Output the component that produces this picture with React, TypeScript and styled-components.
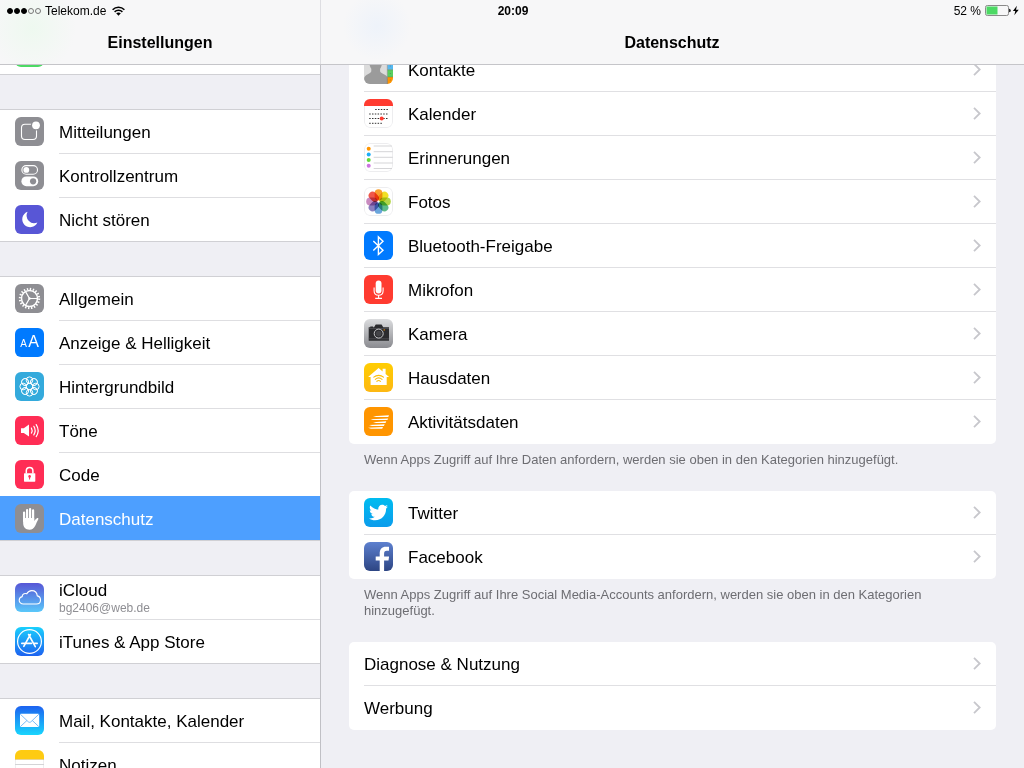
import React from "react";
import styled, { createGlobalStyle, css } from "styled-components";
import { FaTwitter } from "react-icons/fa";

const GlobalStyle = createGlobalStyle`
  * { box-sizing: border-box; }
  body {
    margin: 0;
    background: #efeff4;
    color: #000;
    font-family: "Liberation Sans", Arial, Helvetica, sans-serif;
    font-size: 17px;
  }
  h1, h2, p, ul { margin: 0; padding: 0; }
  ul { list-style: none; }
`;

const Screen = styled.div`
  display: flex;
  flex-direction: column;
  height: 100vh;
  overflow: hidden;
`;

/* ---------- header ---------- */

const Header = styled.header`
  flex: none;
  border-bottom: 1px solid #c5c5c9;
  background:
    linear-gradient(#dedee2, #dedee2) 320px 0 / 1px 100% no-repeat,
    radial-gradient(circle at 32px 28px, rgba(232, 250, 234, 0.6), rgba(232, 250, 234, 0) 44px),
    radial-gradient(circle at 377px 26px, rgba(234, 241, 251, 0.7), rgba(234, 241, 251, 0) 34px),
    #f7f7f8;
`;

const StatusBar = styled.div`
  display: grid;
  grid-template-columns: 1fr auto 1fr;
  align-items: center;
  height: 20px;
  padding: 1px 5px 0 7px;
  font-size: 12px;
  line-height: 20px;
`;

const StatusGroup = styled.div<{ $end?: boolean }>`
  display: flex;
  align-items: center;
  justify-content: ${(p) => (p.$end ? "flex-end" : "flex-start")};
  gap: 4px;
`;

const Clock = styled.time`
  font-weight: bold;
`;

const Signal = styled.span`
  display: flex;
  gap: 1px;
`;

const SignalDot = styled.i<{ $on: boolean }>`
  width: 6px;
  height: 6px;
  border: 1px solid ${(p) => (p.$on ? "#000" : "#777")};
  border-radius: 50%;
  background: ${(p) => (p.$on ? "#000" : "transparent")};
`;

const Titles = styled.div`
  display: flex;
  height: 44px;
  line-height: 46px;
  text-align: center;
`;

const SideTitle = styled.h1`
  flex: 0 0 320px;
  font-size: 16px;
`;

const MainTitle = styled.h2`
  flex: 1;
  font-size: 16px;
`;

/* ---------- panes ---------- */

const Panes = styled.div`
  display: flex;
  flex: 1;
  min-height: 0;
`;

const Sidebar = styled.nav`
  flex: 0 0 321px;
  overflow: hidden;
  border-right: 1px solid #c0c0c5;
`;

const Detail = styled.main`
  flex: 1;
  min-width: 0;
  overflow: hidden;
  padding: 0 28px;
`;

const Scrolled = styled.div<{ $by: number }>`
  margin-top: -${(p) => p.$by}px;
`;

const SideGroup = styled.ul`
  margin-bottom: 34px;
  border-top: 1px solid #d0d0d4;
  border-bottom: 1px solid #d0d0d4;
  background: #fff;
`;

const SideItem = styled.li`
  &:last-child > a { height: 43px; }
  &:last-child > a > div { border-bottom: 0; }
  &:has(+ li > [aria-current]) > a > div { border-color: #4d9fff; }
`;

const SideLink = styled.a<{ $selected: boolean }>`
  display: flex;
  align-items: stretch;
  gap: 15px;
  height: 44px;
  padding-left: 15px;
  color: #000;
  text-decoration: none;
  & > svg { margin-top: 7px; }
  ${(p) =>
    p.$selected &&
    css`
      background: #4d9fff;
      box-shadow: 0 -1px #4d9fff;
      color: #fff;
    `}
`;

const SideText = styled.div`
  display: flex;
  flex: 1;
  flex-direction: column;
  justify-content: center;
  padding-top: 2px;
  border-bottom: 1px solid #dedee1;
  line-height: 20px;
`;

const SideNote = styled.small`
  color: #8e8e93;
  font-size: 12px;
  line-height: 15px;
`;

const Card = styled.ul`
  overflow: hidden;
  padding-left: 15px;
  border-radius: 5px;
  background: #fff;
`;

const CardItem = styled.li`
  border-bottom: 1px solid #e0e0e3;
  &:last-child { border-color: transparent; }
`;

const CardLink = styled.a`
  display: flex;
  align-items: center;
  gap: 15px;
  height: 43px;
  padding-right: 15px;
  color: #000;
  text-decoration: none;
`;

const CardLabel = styled.span`
  flex: 1;
  padding-top: 2px;
  line-height: 20px;
`;

const Footnote = styled.p`
  padding: 8px 15px 23px;
  color: #6d6d72;
  font-size: 13px;
  line-height: 16px;
`;

const IconSvg = styled.svg`
  display: block;
  flex: none;
  width: 29px;
  height: 29px;
  border-radius: 6px;
`;

/* ---------- icons ---------- */

type Fill = string | [string, string];

function Tile({ id, fill, framed, children }: { id: string; fill: Fill; framed?: boolean; children?: React.ReactNode }) {
  const gradient = Array.isArray(fill);
  return (
    <IconSvg viewBox="0 0 29 29" fill="none" aria-hidden="true">
      {gradient && (
        <linearGradient id={id} x1="0" y1="0" x2="0" y2="1">
          <stop stopColor={fill[0]} />
          <stop offset="1" stopColor={fill[1]} />
        </linearGradient>
      )}
      <rect width="29" height="29" fill={gradient ? `url(#${id})` : (fill as string)} />
      {framed && <rect x="0.5" y="0.5" width="28" height="28" rx="5.5" stroke="#ededef" />}
      {children}
    </IconSvg>
  );
}

const GRAY = "#8e8e93";
const ring = (n: number) => Array.from({ length: n }, (_, i) => (i * 360) / n);

const icons: Record<string, React.ReactNode> = {
  green: <Tile id="green" fill="#4cd964" />,
  notifications: (
    <Tile id="notifications" fill={GRAY}>
      <rect x="6.5" y="7.2" width="15" height="15.3" rx="3.5" stroke="#fff" strokeWidth="1.1" />
      <circle cx="21" cy="8.3" r="5.2" fill={GRAY} />
      <circle cx="21" cy="8.3" r="3.9" fill="#fff" />
    </Tile>
  ),
  control: (
    <Tile id="control" fill={GRAY}>
      <rect x="6.9" y="4.6" width="15.6" height="8.6" rx="4.3" stroke="#fff" strokeWidth="1.1" />
      <circle cx="11.3" cy="8.9" r="2.9" fill="#fff" />
      <rect x="6.4" y="15.4" width="16.8" height="9.8" rx="4.9" fill="#fff" />
      <circle cx="18.1" cy="20.3" r="3.1" fill={GRAY} />
    </Tile>
  ),
  moon: (
    <Tile id="moon" fill="#5856d6">
      <path d="M12.6 6.8A7.9 7.9 0 1 0 22.4 17.4 7.6 7.6 0 0 1 12.6 6.8z" fill="#fff" />
    </Tile>
  ),
  gear: (
    <Tile id="gear" fill={GRAY}>
      <circle cx="14.5" cy="14.5" r="9.6" stroke="#fff" strokeWidth="2.2" strokeDasharray="1.4 1.616" />
      <circle cx="14.5" cy="14.5" r="8" stroke="#fff" strokeWidth="1.5" />
      <path d="M14.5 14.5h7.5M14.5 14.5l-3.8-6.6M14.5 14.5l-3.8 6.6" stroke="#fff" strokeWidth="1.2" />
      <circle cx="14.5" cy="14.5" r="1.2" fill="#fff" />
    </Tile>
  ),
  display: (
    <Tile id="display" fill="#007aff">
      <text x="5.2" y="19" fill="#fff" fontSize="10">A</text>
      <text x="13.3" y="19" fill="#fff" fontSize="16">A</text>
    </Tile>
  ),
  wallpaper: (
    <Tile id="wallpaper" fill="#34aadc">
      <g stroke="#fff" strokeWidth="1">
        <circle cx="14.5" cy="14.5" r="3.3" />
        {ring(8).map((a) => (
          <circle key={a} cx="14.5" cy="8.2" r="3.3" transform={`rotate(${a} 14.5 14.5)`} />
        ))}
      </g>
    </Tile>
  ),
  sounds: (
    <Tile id="sounds" fill="#ff2d55">
      <path d="M6 12.2h2.8l5.2-3.6v12l-5.2-3.6H6z" fill="#fff" />
      <g stroke="#fff" strokeWidth="1.2" strokeLinecap="round">
        <path d="M16.4 12.1a5 5 0 0 1 0 5" />
        <path d="M18.8 10.3a8 8 0 0 1 0 8.6" />
        <path d="M21.2 8.6a11 11 0 0 1 0 12" />
      </g>
    </Tile>
  ),
  lock: (
    <Tile id="lock" fill="#ff2d55">
      <rect x="9" y="13.2" width="11.3" height="8.5" rx="0.6" fill="#fff" />
      <path d="M11.3 13.5v-2.8a3.3 3.3 0 0 1 6.6 0v2.8" stroke="#fff" strokeWidth="1.5" />
      <circle cx="14.6" cy="16.4" r="1.3" fill="#ff2d55" />
      <path d="M14.6 16.5v3" stroke="#ff2d55" strokeWidth="1" />
    </Tile>
  ),
  hand: (
    <Tile id="hand" fill={GRAY}>
      <g stroke="#fff" strokeWidth="2.2" strokeLinecap="round">
        <path d="M9.1 8.6V17M12.1 6v10M15.1 5v11M18.1 6.4V17" />
      </g>
      <path d="M8 14h11.2v3.2c.8-1.4 1.700-2.500 2.800-3 .8-.3 1.700.2 1.300 1-1 1.700-2 4.400-3.200 6.700-1.300 2.400-2.900 3.800-5.600 3.800-4 0-5.900-2.400-6.300-5.600z" fill="#fff" />
    </Tile>
  ),
  cloud: (
    <Tile id="cloud" fill={["#5756d6", "#5ac8fa"]}>
      <path d="M8.300 21C5.900 21 4.200 19.400 4.200 17.300c0-1.900 1.200-3.300 3-3.700.1-1.900 1.500-3.100 3.200-3.100.5 0 1 .1 1.400.3 1-2 2.700-3.200 4.900-3.200 3 0 5.300 2.200 5.600 5.300 2 .5 3.200 2 3.200 4 0 2.300-1.700 4.100-4.100 4.100z" stroke="#fff" strokeWidth="1.1" />
    </Tile>
  ),
  appstore: (
    <Tile id="appstore" fill={["#1ad0fd", "#1d62f0"]}>
      <circle cx="14.500" cy="14.500" r="11.900" stroke="#fff" strokeWidth="1.200" />
      <g stroke="#fff" strokeWidth="1.600" strokeLinecap="round">
        <path d="M13.600 7.500l6.700 12.200M15.400 7.500L8.800 19.400" />
        <path d="M6.800 16.400h9.700M19.500 16.400h2.700" />
      </g>
    </Tile>
  ),
  mail: (
    <Tile id="mail" fill={["#1d62f0", "#19d5fd"]}>
      <rect x="5" y="7.800" width="19.200" height="13.200" rx="1" fill="#fff" />
      <path d="M5.300 8.200l8 7.600c.8.700 1.800.7 2.600 0l8-7.600M5.400 20.600l6.600-6.200M23.800 20.600l-6.600-6.200" stroke="#6db4f6" strokeWidth="0.900" />
    </Tile>
  ),
  notes: (
    <Tile id="notes" fill="#fff" framed>
      <rect width="29" height="9" fill="#fecb12" />
      <path d="M0 9.500h29" stroke="#d9b64a" strokeWidth="0.600" />
      <path d="M0 14.500h29M0 20.500h29" stroke="#d4d4d6" />
    </Tile>
  ),
  contacts: (
    <Tile id="contacts" fill="#dcdcdc">
      <path d="M11.700 2c4.200 0 6.600 2.600 6.300 6.300-.2 2.600-.9 4-1.900 5.400v2.600c0 2.400 7.400 2.800 7.900 7.700v5H0v-5c.5-4.900 7.300-5.300 7.300-7.700v-2.600c-1-1.400-1.700-2.800-1.900-5.400C5.100 4.600 7.500 2 11.700 2z" fill="#9b9b9b" />
      <path d="M23.500 0H29v8h-5.500z" fill="#9b9b9b" />
      <path d="M23.500 8H29v6.800h-5.500z" fill="#54b8f0" />
      <path d="M23.500 14.800H29V22h-5.500z" fill="#58cf5e" />
      <path d="M23.500 22H29v7h-5.500z" fill="#ff9500" />
      <path d="M23.300 0v29M23.500 14.800H29M23.500 22H29" stroke="#666" strokeWidth="0.400" />
      <path d="M25.800 11h1.200M25.800 18.500h1.200M25.800 25h1.200" stroke="#555" strokeWidth="0.800" opacity="0.500" />
    </Tile>
  ),
  calendar: (
    <Tile id="calendar" fill="#fff" framed>
      <rect width="29" height="7" fill="#ff3b30" />
      <g stroke="#333" strokeWidth="1" strokeDasharray="1.500 1.300">
        <path d="M11.200 10.500h13.500M5.200 15h19.500M5.200 19.500h19.500M5.200 24.300h13.800" />
      </g>
      <circle cx="17.700" cy="19.600" r="2" fill="#ff3b30" />
    </Tile>
  ),
  reminders: (
    <Tile id="reminders" fill="#fff" framed>
      <path d="M9.700 3h18.300M9.700 8.700h19M9.700 14.300h19M9.700 20h19M9.700 25.500h18.300" stroke="#d0d0d3" strokeWidth="0.900" />
      <circle cx="4.700" cy="5.700" r="2" fill="#ff9500" />
      <circle cx="4.700" cy="11.400" r="2" fill="#1badf8" />
      <circle cx="4.700" cy="17.100" r="2" fill="#63da38" />
      <circle cx="4.700" cy="22.700" r="2" fill="#cc73e1" />
    </Tile>
  ),
  photos: (
    <Tile id="photos" fill="#fff" framed>
      {["#f9a030", "#f1e025", "#b3d646", "#5cbb8a", "#6aa6dc", "#8a7fc0", "#c98bc0", "#f0584a"].map((c, i) => (
        <rect
          key={c}
          x="10.600"
          y="2.200"
          width="7.800"
          height="11.200"
          rx="3.900"
          fill={c}
          style={{ mixBlendMode: "multiply" }}
          transform={`rotate(${i * 45} 14.500 14.500)`}
        />
      ))}
    </Tile>
  ),
  bluetooth: (
    <Tile id="bluetooth" fill="#007aff">
      <path d="M9.300 10l9.700 9.200-4.600 4.300V5.900l4.600 4.300-9.700 9.200" stroke="#fff" strokeWidth="1.400" />
    </Tile>
  ),
  mic: (
    <Tile id="mic" fill="#ff3b30">
      <rect x="11.700" y="5.500" width="5.800" height="13" rx="2.900" fill="#fff" />
      <path d="M10.100 12.500v3.200c0 2.800 1.900 4.600 4.500 4.600s4.500-1.800 4.500-4.600v-3.200M14.600 20.300v3M11.200 23.400h6.800" stroke="#fff" strokeWidth="1.100" />
    </Tile>
  ),
  camera: (
    <Tile id="camera" fill={["#dbdcde", "#8a8b90"]}>
      <path d="M4.700 8.300h1.600v-.9h2.800v.9h1l1.300-2.300c.2-.4.500-.5.900-.5h4.700c.4 0 .7.100.9.500l1.300 2.300h5.800v13.400H4.700z" fill="#2b2b2e" />
      <path d="M4.700 9.500h20.300M4.700 19.800h20.300" stroke="#66666a" strokeWidth="0.500" />
      <circle cx="14.700" cy="14.600" r="4.500" fill="#2b2b2e" stroke="#c9c9cc" strokeWidth="1" />
      <circle cx="14.700" cy="14.600" r="2.800" fill="#444448" />
      <circle cx="20.200" cy="10.900" r="0.700" fill="#ff9500" />
    </Tile>
  ),
  home: (
    <Tile id="home" fill={["#ffcd02", "#fdb813"]}>
      <path d="M14.600 5l4 3.400V5.700h3v5.200l3.500 3h-2.400v8H6.600v-8H4.100z" fill="#fff" />
      <g stroke="#fcbf0a" strokeWidth="1.100" strokeLinecap="round">
        <path d="M9.800 14.200c2.800-2.500 6.900-2.500 9.700 0M11.300 16.300c2-1.700 4.700-1.700 6.700 0M12.900 18.300c1.100-.9 2.500-.9 3.500 0" />
      </g>
    </Tile>
  ),
  activity: (
    <Tile id="activity" fill="#ff9500">
      <path d="M9 9.300l16-1-.7 1.700H12zM6.500 12.200l17.700-.8-.8 1.600H9zM9 15.200l13.300-.9-.8 1.700H12zM5 18l15.700-.7-.8 1.600H8zM4 20.800l15-.7-.8 1.700H7z" fill="#fff" />
    </Tile>
  ),
  twitter: (
    <Tile id="twitter" fill={["#00bcf0", "#0b9cec"]}>
      <FaTwitter x="5" y="5" size={19} color="#fff" />
    </Tile>
  ),
  facebook: (
    <Tile id="facebook" fill={["#5d80cf", "#2d4583"]}>
      <path d="M15.700 29V18.600h-4v-4h4v-2.800c0-4.600 2.200-7 6.200-7H25v4h-2.200c-2.100 0-2.700 1.100-2.700 2.900v2.900h5l-.6 4h-4.400V29z" fill="#fff" />
    </Tile>
  ),
};

const Chevron = () => (
  <svg width="8" height="13" viewBox="0 0 8 13" fill="none" aria-hidden="true">
    <path d="M1 0.800l5.700 5.700L1 12.200" stroke="#c7c7cc" strokeWidth="1.800" />
  </svg>
);

const Wifi = () => (
  <svg width="15" height="10" viewBox="-2 0 15 10" fill="none" aria-hidden="true">
    <path d="M0.600 3.700c3.300-3.400 8.500-3.400 11.800 0M2.600 5.900c2.200-2.200 5.600-2.200 7.800 0" stroke="#000" strokeWidth="1.500" />
    <path d="M4.200 7.300c1.300-1.200 3.300-1.200 4.600 0L6.500 9.800z" fill="#000" />
  </svg>
);

const Battery = () => (
  <svg width="34" height="12" viewBox="0 0 34 12" fill="none" aria-hidden="true">
    <rect x="0.500" y="0.500" width="23" height="10" rx="1.800" stroke="#8a8a8a" />
    <rect x="1.500" y="1.500" width="11" height="8" fill="#4cd964" />
    <path d="M24.200 3.700c1 .2 1.500.9 1.500 1.800s-.5 1.600-1.500 1.800z" fill="#000" />
    <path d="M31.900 0.800l-4 5.300h2.400l-1 4.200 4.400-5.600h-2.700z" fill="#000" />
  </svg>
);

/* ---------- content ---------- */

type Entry = { icon?: string; label?: string; note?: string; selected?: boolean };

const sideGroups: Entry[][] = [
  [{ icon: "green" }],
  [
    { icon: "notifications", label: "Mitteilungen" },
    { icon: "control", label: "Kontrollzentrum" },
    { icon: "moon", label: "Nicht stören" },
  ],
  [
    { icon: "gear", label: "Allgemein" },
    { icon: "display", label: "Anzeige & Helligkeit" },
    { icon: "wallpaper", label: "Hintergrundbild" },
    { icon: "sounds", label: "Töne" },
    { icon: "lock", label: "Code" },
    { icon: "hand", label: "Datenschutz", selected: true },
  ],
  [
    { icon: "cloud", label: "iCloud", note: "bg2406@web.de" },
    { icon: "appstore", label: "iTunes & App Store" },
  ],
  [
    { icon: "mail", label: "Mail, Kontakte, Kalender" },
    { icon: "notes", label: "Notizen" },
  ],
];

const cards: { rows: Entry[]; footnote?: string }[] = [
  {
    rows: [
      { icon: "contacts", label: "Kontakte" },
      { icon: "calendar", label: "Kalender" },
      { icon: "reminders", label: "Erinnerungen" },
      { icon: "photos", label: "Fotos" },
      { icon: "bluetooth", label: "Bluetooth-Freigabe" },
      { icon: "mic", label: "Mikrofon" },
      { icon: "camera", label: "Kamera" },
      { icon: "home", label: "Hausdaten" },
      { icon: "activity", label: "Aktivitätsdaten" },
    ],
    footnote: "Wenn Apps Zugriff auf Ihre Daten anfordern, werden sie oben in den Kategorien hinzugefügt.",
  },
  {
    rows: [
      { icon: "twitter", label: "Twitter" },
      { icon: "facebook", label: "Facebook" },
    ],
    footnote:
      "Wenn Apps Zugriff auf Ihre Social Media-Accounts anfordern, werden sie oben in den Kategorien hinzugefügt.",
  },
  { rows: [{ label: "Diagnose & Nutzung" }, { label: "Werbung" }] },
];

export default function App() {
  return (
    <Screen>
      <GlobalStyle />
      <Header>
        <StatusBar>
          <StatusGroup>
            <Signal>
              {[1, 2, 3, 4, 5].map((n) => (
                <SignalDot key={n} $on={n <= 3} />
              ))}
            </Signal>
            <span>Telekom.de</span>
            <Wifi />
          </StatusGroup>
          <Clock>20:09</Clock>
          <StatusGroup $end>
            <span>52 %</span>
            <Battery />
          </StatusGroup>
        </StatusBar>
        <Titles>
          <SideTitle>Einstellungen</SideTitle>
          <MainTitle>Datenschutz</MainTitle>
        </Titles>
      </Header>
      <Panes>
        <Sidebar>
          <Scrolled $by={35}>
            {sideGroups.map((group, g) => (
              <SideGroup key={g}>
                {group.map((item) => (
                  <SideItem key={item.icon}>
                    <SideLink href="#" $selected={!!item.selected} aria-current={item.selected ? "page" : undefined}>
                      {icons[item.icon!]}
                      <SideText>
                        {item.label}
                        {item.note && <SideNote>{item.note}</SideNote>}
                      </SideText>
                    </SideLink>
                  </SideItem>
                ))}
              </SideGroup>
            ))}
          </Scrolled>
        </Sidebar>
        <Detail>
          <Scrolled $by={17}>
            {cards.map((card, c) => (
              <section key={c}>
                <Card>
                  {card.rows.map((row) => (
                    <CardItem key={row.label}>
                      <CardLink href="#">
                        {row.icon && icons[row.icon]}
                        <CardLabel>{row.label}</CardLabel>
                        <Chevron />
                      </CardLink>
                    </CardItem>
                  ))}
                </Card>
                {card.footnote && <Footnote>{card.footnote}</Footnote>}
              </section>
            ))}
          </Scrolled>
        </Detail>
      </Panes>
    </Screen>
  );
}
